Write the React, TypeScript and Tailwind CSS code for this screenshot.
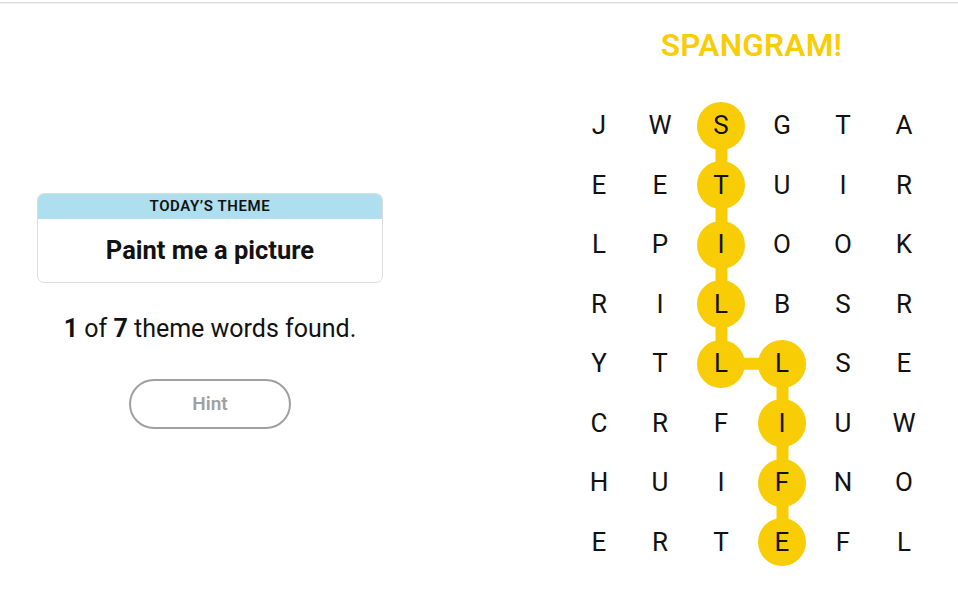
const GRID = [
  "JWSGTA",
  "EETUIR",
  "LPIOOK",
  "RILBSR",
  "YTLLSE",
  "CRFIUW",
  "HUIFNO",
  "ERTEFL",
];

const COL_W = 61;
const ROW_H = 59.5;

// spangram path: row, col
const PATH: [number, number][] = [
  [0, 2],
  [1, 2],
  [2, 2],
  [3, 2],
  [4, 2],
  [4, 3],
  [5, 3],
  [6, 3],
  [7, 3],
];

const isFound = (r: number, c: number) =>
  PATH.some(([pr, pc]) => pr === r && pc === c);

const cx = (c: number) => c * COL_W + COL_W / 2;
const cy = (r: number) => r * ROW_H + ROW_H / 2;

const ThemeCard = () => (
  <div className="w-[346px] rounded-[7px] border border-[#dcdcdc] overflow-hidden">
    <div className="h-[25px] bg-[#aedfee] flex items-center justify-center text-[15px] font-semibold tracking-[0.04em] text-[#121212] uppercase">
      Today’s Theme
    </div>
    <div className="h-[63px] flex items-center justify-center text-[25.5px] font-bold text-[#121212]">
      Paint me a picture
    </div>
  </div>
);

const Board = () => (
  <div className="relative w-[366px] h-[476px]">
    <svg
      className="absolute inset-0"
      width={366}
      height={476}
      viewBox="0 0 366 476"
    >
      <polyline
        points={PATH.map(([r, c]) => `${cx(c)},${cy(r)}`).join(" ")}
        fill="none"
        stroke="#f8cd05"
        strokeWidth={12}
      />
    </svg>
    <div className="relative grid grid-cols-6">
      {GRID.map((row, r) =>
        row.split("").map((ch, c) => (
          <div
            key={`${r}-${c}`}
            className="h-[59.5px] flex items-center justify-center"
          >
            <div
              className={
                "w-[48px] h-[48px] rounded-full flex items-center justify-center text-[26px] text-[#121212] " +
                (isFound(r, c) ? "bg-[#f8cd05]" : "")
              }
            >
              {ch}
            </div>
          </div>
        ))
      )}
    </div>
  </div>
);

export default function App() {
  return (
    <div
      className="w-[958px] h-[593px] bg-white overflow-hidden"
      style={{ fontFamily: "Roboto, 'Liberation Sans', sans-serif" }}
    >
      <div className="h-[3px] border-b border-[#dcdcdc] shadow-[0_1px_1px_rgba(0,0,0,0.06)]" />
      <div className="flex">
        <div className="w-[420px] flex flex-col items-center pt-[190px]">
          <ThemeCard />
          <p className="mt-[31px] text-[25px] leading-[30px] text-[#121212]">
            <span className="font-bold">1</span> of{" "}
            <span className="font-bold">7</span> theme words found.
          </p>
          <button className="mt-[35px] w-[162px] h-[50px] rounded-full border-2 border-[#a0a0a0] text-[19px] font-semibold text-[#a0a0a0]">
            Hint
          </button>
        </div>
        <div className="ml-[148.5px] flex flex-col items-center">
          <h1 className="mt-[25px] h-[36px] leading-[36px] text-[31.5px] font-semibold text-[#f8cd05] tracking-[0.01em]">
            SPANGRAM!
          </h1>
          <div className="mt-[32px]">
            <Board />
          </div>
        </div>
      </div>
    </div>
  );
}
